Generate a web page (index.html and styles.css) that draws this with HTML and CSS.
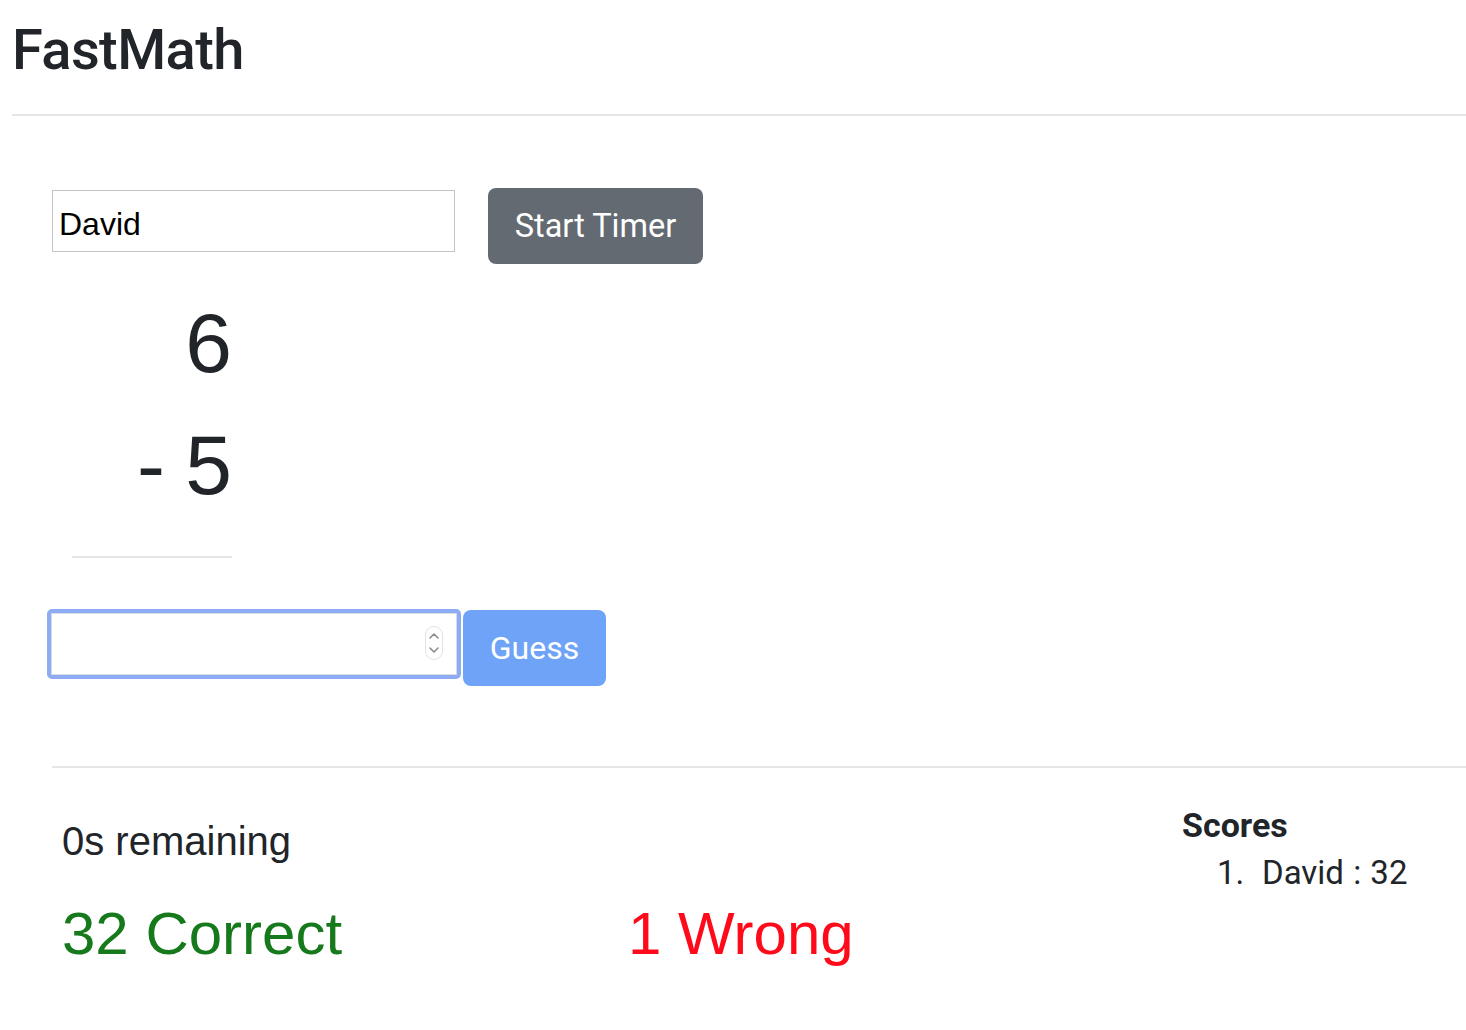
FILE: index.html
```html
<!DOCTYPE html>
<html>
<head>
<meta charset="utf-8">
<title>FastMath</title>
<link rel="stylesheet" href="styles.css">
</head>
<body>
<header class="header">
  <h1 class="title">FastMath</h1>
</header>
<hr class="rule-top">
<main class="game">
  <div class="start-row">
    <input class="name-input" type="text" value="David">
    <button class="btn-start">Start Timer</button>
  </div>
  <div class="problem">
    <div class="num">6</div>
    <div class="num">- 5</div>
  </div>
  <hr class="rule-short">
  <div class="guess-row">
    <div class="answer-wrap">
      <input class="answer-input" type="text" value="">
      <svg class="spinner" width="18" height="34" viewBox="0 0 18 34">
        <rect x="0.5" y="0.5" width="17" height="33" rx="8.5" fill="#fff" stroke="#e2e2e2"/>
        <path d="M5 12 L9 8 L13 12" fill="none" stroke="#8a8a8a" stroke-width="1.6" stroke-linecap="round" stroke-linejoin="round"/>
        <path d="M5 22 L9 26 L13 22" fill="none" stroke="#8a8a8a" stroke-width="1.6" stroke-linecap="round" stroke-linejoin="round"/>
      </svg>
    </div>
    <button class="btn-guess">Guess</button>
  </div>
  <hr class="rule-bottom">
  <section class="results">
    <div class="stats">
      <p class="remaining">0s remaining</p>
      <div class="tally">
        <span class="correct">32 Correct</span>
        <span class="wrong">1 Wrong</span>
      </div>
    </div>
    <aside class="scores">
      <h2 class="scores-title">Scores</h2>
      <ol class="scores-list">
        <li class="score-item"><span class="score-rank">1.</span><span class="score-text">David : 32</span></li>
      </ol>
    </aside>
  </section>
</main>
</body>
</html>
```

FILE: styles.css
```css
html, body {
  margin: 0;
  padding: 0;
  background: #fff;
  color: #212529;
  font-family: Roboto, "Liberation Sans", sans-serif;
}

.header {
  padding: 17px 0 0 12px;
}

.title {
  margin: 0;
  font-family: Roboto, sans-serif;
  font-weight: 500;
  font-size: 56px;
  line-height: 67px;
  letter-spacing: -0.6px;
  color: #212529;
}

.rule-top {
  margin: 30px 0 0 12px;
  border: 0;
  border-top: 2px solid #e6e6e6;
  height: 0;
}

.game {
  padding-left: 52px;
}

.start-row {
  display: flex;
  align-items: flex-start;
  margin-top: 72px;
  gap: 33px;
}

.name-input {
  margin-top: 2px;
  box-sizing: border-box;
  width: 403px;
  height: 62px;
  border: 1px solid #c4c4c4;
  padding: 6px 7px 0 6px;
  font-family: "Liberation Sans", Arial, sans-serif;
  font-size: 32px;
  color: #000;
  background: #fff;
  outline: none;
}

.btn-start {
  box-sizing: border-box;
  width: 215px;
  height: 76px;
  border: 0;
  border-radius: 8px;
  background: #636a71;
  color: #fff;
  font-family: Roboto, sans-serif;
  font-size: 32.5px;
  padding: 0;
}

.problem {
  margin-top: 18px;
  width: 180px;
  text-align: right;
  font-family: "Liberation Sans", Arial, sans-serif;
  font-size: 84px;
  line-height: 122px;
  word-spacing: -3px;
  color: #212529;
}

.rule-short {
  margin: 30px 0 0 20px;
  width: 160px;
  border: 0;
  border-top: 2px solid #e6e6e6;
  height: 0;
}

.guess-row {
  display: flex;
  align-items: flex-start;
  margin-top: 51px;
  margin-left: -5px;
  gap: 2px;
}

.answer-wrap {
  position: relative;
  width: 414px;
  height: 70px;
}

.answer-input {
  box-sizing: border-box;
  width: 414px;
  height: 70px;
  border: 4px solid #8eacf4;
  border-radius: 5px;
  box-shadow: inset 0 0 0 1px #d9dce3;
  background: #fff;
  outline: none;
  font-size: 32px;
  padding: 0 10px;
}

.spinner {
  position: absolute;
  left: 378px;
  top: 17px;
}

.btn-guess {
  margin-top: 1px;
  box-sizing: border-box;
  width: 143px;
  height: 76px;
  border: 0;
  border-radius: 8px;
  background: #6ea3f8;
  color: #fff;
  font-family: Roboto, sans-serif;
  font-size: 32px;
  padding: 0;
}

.rule-bottom {
  margin: 80px 0 0 0;
  border: 0;
  border-top: 2px solid #e6e6e6;
  height: 0;
}

.results {
  display: flex;
  padding-left: 10px;
}

.stats {
  flex: 1;
}

.remaining {
  margin: 49px 0 0 0;
  font-family: "Liberation Sans", Arial, sans-serif;
  font-size: 40px;
  line-height: 48px;
  color: #212529;
}

.tally {
  margin-top: 33px;
  display: grid;
  grid-template-columns: 566px auto;
  font-family: "Liberation Sans", Arial, sans-serif;
  font-size: 60px;
  line-height: 72px;
}

.correct {
  color: #167a1d;
}

.wrong {
  color: #ff0a1a;
}

.scores {
  width: 284px;
}

.scores-title {
  margin: 37px 0 0 0;
  font-family: Roboto, sans-serif;
  font-weight: 700;
  font-size: 34px;
  line-height: 40px;
  color: #212529;
}

.scores-list {
  list-style: none;
  margin: 4px 0 0 0;
  padding-left: 35px;
  font-family: Roboto, sans-serif;
  font-size: 33px;
  line-height: 48px;
  color: #212529;
}

.score-item {
  display: flex;
}

.score-rank {
  width: 45px;
}

.score-text {
  word-spacing: 1px;
}
```
